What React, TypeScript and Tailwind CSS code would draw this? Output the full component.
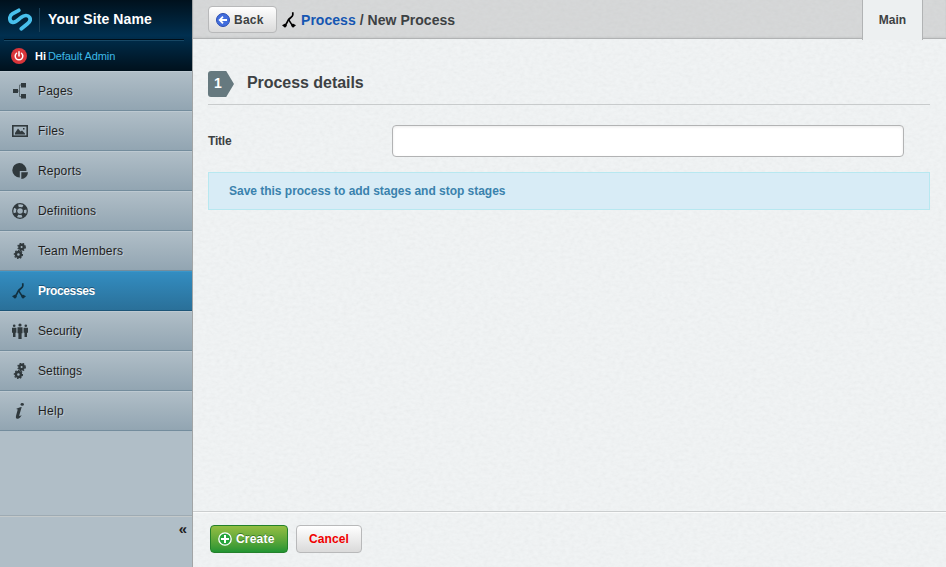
import React from "react";

type IconName = "pages" | "files" | "reports" | "definitions" | "gears" | "process" | "security" | "help";

const Gear = ({ cx, cy, r }: { cx: number; cy: number; r: number }) => (
  <g>
    <circle cx={cx} cy={cy} r={r} fill="none" stroke="currentColor" strokeWidth="2.4" />
    <circle cx={cx} cy={cy} r={r + 1.5} fill="none" stroke="currentColor" strokeWidth="1.3" strokeDasharray="1.5 1.5" />
  </g>
);

const ProcessIcon = ({ className = "" }: { className?: string }) => (
  <svg viewBox="0 0 16 16" className={`size-4 shrink-0 ${className}`} fill="none" stroke="currentColor">
    <path d="M10.800 0.300V3C10.800 4.800 7.500 6 6.300 8C5 10.200 4.600 12 2.800 13.800" strokeWidth="1.700" />
    <path d="M6.500 7.500C8 9 8.300 12 11.300 13.800" strokeWidth="1.500" />
    <path d="M0 13.200L3.200 11.600L5 13.800L3 15.800ZM9 13.800L10.800 11.600L14 13.200L11 15.800Z" fill="currentColor" stroke="none" />
  </svg>
);

const NavIcon = ({ name }: { name: IconName }) => {
  if (name === "process") return <ProcessIcon className="text-[#12303f]" />;
  return (
    <svg viewBox="0 0 16 16" className="size-4 shrink-0 text-[#30393d]" fill="currentColor">
      {name === "pages" && (
        <>
          <path d="M1 6h5v4H1zM9 0h5v4.500H9zM9 11h5v4.500H9z" />
          <path d="M6 8h1.500M9 2H7.500v11.500H9" fill="none" stroke="#5d6a71" />
        </>
      )}
      {name === "files" && (
        <>
          <rect x="0.8" y="2.800" width="14.400" height="10.400" fill="none" stroke="currentColor" strokeWidth="1.6" />
          <path d="M3 11.500V10l3-4.500 2.500 3L10 7.500l3 3v1z" />
          <rect x="11" y="5" width="1.500" height="1.500" />
        </>
      )}
      {name === "reports" && (
        <>
          <path d="M7.200 0A7.200 7.200 0 1 0 7.800 14.400V8h6.600A7.200 7.200 0 0 0 7.200 0z" />
          <path d="M9.300 9.300H16A7 7 0 0 1 9.300 16z" />
        </>
      )}
      {name === "definitions" && (
        <>
          <circle cx="8" cy="8" r="7.300" fill="none" stroke="currentColor" strokeWidth="1.2" />
          <circle cx="8" cy="8" r="5.500" fill="none" stroke="currentColor" strokeWidth="4" strokeDasharray="4 4.640" strokeDashoffset="-2.320" />
          <circle cx="8" cy="8" r="3.400" fill="none" stroke="currentColor" strokeWidth="1.2" />
        </>
      )}
      {name === "gears" && (
        <>
          <Gear cx={9.6} cy={4} r={2.2} />
          <Gear cx={6.4} cy={11.5} r={2.5} />
        </>
      )}
      {name === "security" && (
        <>
          <circle cx="2.200" cy="2.800" r="1.300" />
          <path d="M0 4.800h4.400v5H3.500V14H1V9.800H0z" />
          <circle cx="8" cy="2" r="1.600" />
          <path d="M5.500 4.200h5v6H9.600V16H6.400v-5.800h-.9z" />
          <circle cx="13.800" cy="2.800" r="1.300" />
          <path d="M11.600 4.800H16v5h-1V14h-2.500V9.800h-.9z" />
        </>
      )}
      {name === "help" && (
        <>
          <ellipse cx="10.200" cy="1.400" rx="1.700" ry="1.300" />
          <path d="M4.600 5.600C6 5 7.500 4.300 9.700 4L7.300 12.300c-.3 1.200.7 1 2.400-.2C8.500 14.500 7 16 5.400 15.800c-1.800-.2-1.700-1.700-1.300-3.300L5.600 7c.2-.8-.3-.8-1-.7z" />
        </>
      )}
    </svg>
  );
};

const items: { label: string; icon: IconName; spacing: string }[] = [
  { label: "Pages", icon: "pages", spacing: "tracking-[0.2px]" },
  { label: "Files", icon: "files", spacing: "tracking-[0.2px]" },
  { label: "Reports", icon: "reports", spacing: "tracking-[0.2px]" },
  { label: "Definitions", icon: "definitions", spacing: "tracking-[0.2px]" },
  { label: "Team Members", icon: "gears", spacing: "tracking-[0.2px]" },
  { label: "Processes", icon: "process", spacing: "tracking-[-0.35px]" },
  { label: "Security", icon: "security", spacing: "tracking-[0.1px]" },
  { label: "Settings", icon: "gears", spacing: "tracking-[0.1px]" },
  { label: "Help", icon: "help", spacing: "tracking-[0.3px]" },
];

const Sidebar = () => (
  <aside className="flex w-48 shrink-0 flex-col bg-[#b0bec7]">
    <header className="h-[71px] bg-linear-to-b from-[#00111d] via-[#002f4f] via-50% to-[#00111d]">
      <div className="flex h-[39px] items-center pl-2">
        <svg viewBox="0 0 24 24" className="size-6" fill="none" stroke="#48c0ec" strokeWidth="3.700" strokeLinecap="round">
          <path d="M10.800 2.300L4.300 5.900C0.700 8 1.100 13.800 4.800 14.300C8.500 14.500 10.500 11.300 13 9.500C16 7.200 19.800 6.600 21.500 9.300C23 11.700 21.800 14 19.500 15.700L13.300 20.800" />
        </svg>
        <i className="ml-[7px] h-6 w-px bg-[#1b4158]" />
        <b className="-mt-0.5 ml-2 text-sm leading-5 tracking-[0.1px] whitespace-nowrap text-white">Your Site Name</b>
      </div>
      <div className="mr-2 ml-1 h-0.5 border-t border-b border-t-[#000d17] border-b-[#174764]" />
      <div className="flex h-[30px] items-center pl-[11px] text-[11px]">
        <svg viewBox="0 0 16 16" className="size-4" fill="none" stroke="white" strokeWidth="1.5" strokeLinecap="round">
          <circle cx="8" cy="8" r="8" fill="#d9353a" stroke="none" />
          <path d="M8 3.700V8M5.500 5.200a3.800 3.800 0 1 0 5 0" />
        </svg>
        <b className="ml-2 text-white">Hi</b>
        <span className="ml-0.5 tracking-[-0.1px] text-[#3ebae8]">Default Admin</span>
      </div>
    </header>
    <nav>
      {items.map(({ label, icon, spacing }) => {
        const active = label === "Processes";
        return (
          <a
            key={label}
            className={`flex h-10 items-center border-t border-b pl-3 text-xs ${spacing} ${
              active
                ? "border-t-[#3b96c9] border-b-[#1c5578] bg-linear-to-b from-[#338dc1] to-[#2a7099] font-bold text-white [text-shadow:0_-1px_0_#1c5578]"
                : "border-t-[#bdc9d1] border-b-[#748d9d] bg-linear-to-b from-[#b0bec7] to-[#92a5b2] text-[#1f1f1f] [text-shadow:1px_1px_0_#bfcad2]"
            }`}
          >
            <NavIcon name={icon} />
            <span className="ml-2.5 whitespace-nowrap">{label}</span>
          </a>
        );
      })}
    </nav>
    <div className="mt-auto h-[52px] border-t border-[#9eabb3]">
      <div className="border-t border-[#c3c9ca] pt-0.5 pr-[5px] text-right text-[15px] leading-5 font-bold text-[#1f1f1f]">«</div>
    </div>
  </aside>
);

const Paper = () => (
  <svg className="pointer-events-none absolute inset-0 size-full opacity-[0.07]">
    <filter id="grain">
      <feTurbulence type="fractalNoise" baseFrequency="0.22 0.32" numOctaves="3" seed="4" />
      <feColorMatrix type="saturate" values="0" />
      <feComponentTransfer>
        <feFuncA type="linear" slope="0" intercept="1" />
      </feComponentTransfer>
    </filter>
    <rect width="100%" height="100%" filter="url(#grain)" />
  </svg>
);

export default function App() {
  return (
    <div className="flex h-[567px] w-[946px] overflow-hidden font-['Liberation_Sans',Arial,sans-serif] text-[#3d4143]">
      <Sidebar />
      <main className="relative isolate flex min-w-0 flex-1 flex-col border-l border-[#a2a5a6] bg-[#f3f6f7]">
        <div className="-z-10">
          <Paper />
        </div>
        <header className="flex h-[39px] shrink-0 border-b border-[#b1b3b4] bg-[#b0b0b0]/40 shadow-[inset_0_-1px_2px_#00000010]">
          <button className="mt-1.5 ml-[15px] flex h-[27px] w-[69px] items-center rounded border border-[#b8b9ba] bg-linear-to-b from-white to-[#dadada] pl-[7px] text-xs font-bold tracking-[0.25px]">
            <svg viewBox="0 0 14 14" className="size-3.5" fill="none">
              <circle cx="7" cy="7" r="6.500" fill="#416ddd" stroke="#2b4daf" />
              <path d="M11 7H4M7 3.700L3.700 7 7 10.300" stroke="white" strokeWidth="1.800" />
            </svg>
            <span className="ml-1">Back</span>
          </button>
          <ProcessIcon className="mt-3 ml-[5px] text-black" />
          <h1 className="mt-2.5 ml-[3px] text-sm leading-5 font-bold tracking-[0.04px] whitespace-nowrap">
            <a className="text-[#1556b2]">Process</a> / New Process
          </h1>
          <div className="mr-[23px] ml-auto h-10 w-[61px] border-r border-l border-[#b1b3b4] bg-[#edf0f1] pt-3 text-center text-xs leading-4 font-bold">
            Main
          </div>
        </header>
        <section className="flex-1 pr-4 pl-[15px]">
          <div className="flex h-[66px] items-end border-b border-[#c8cbcc] pb-[7px]">
            <div className="h-[26px] w-[26px] rounded-l-[3px] bg-[#66797f] pl-1.5 text-sm leading-[25px] font-bold text-white [clip-path:polygon(0_0,70%_0,100%_50%,70%_100%,0_100%)]">1</div>
            <h2 className="ml-[13px] text-base leading-7 font-bold tracking-[-0.05px]">Process details</h2>
          </div>
          <div className="mt-5 flex h-8 items-center text-xs font-bold">
            <label className="w-[184px] tracking-[-0.2px]">Title</label>
            <input className="h-8 w-[512px] rounded border border-[#b2b3b4] bg-white shadow-[inset_0_1px_3px_#00000015]" />
          </div>
          <div className="mt-[15px] flex h-[38px] items-center border border-[#b8e8f0] bg-[#d8ecf6] pl-5 text-xs font-bold tracking-[-0.02px] text-[#3a82ad]">
            Save this process to add stages and stop stages
          </div>
        </section>
        <footer className="flex h-14 gap-2 border-t border-[#cbcecf] pt-[13px] pl-[17px] text-xs font-bold shadow-[inset_0_1px_0_#fafbfb]">
          <button className="flex h-7 w-[78px] items-center rounded border border-[#24812b] bg-linear-to-b from-[#93be42] to-[#1f9433] pl-[7px] tracking-[0.2px] text-white [text-shadow:0_-1px_0_#3c7a29]">
            <svg viewBox="0 0 14 14" className="size-3.5" fill="none">
              <circle cx="7" cy="7" r="6.200" fill="#25a53b" stroke="white" strokeWidth="1.300" />
              <path d="M7 3v8M3 7h8" stroke="white" strokeWidth="2" />
            </svg>
            <span className="ml-1">Create</span>
          </button>
          <button className="h-7 w-[66px] rounded border border-[#b8b9ba] bg-linear-to-b from-white to-[#dadada] tracking-[0.1px] text-[#f00000]">Cancel</button>
        </footer>
      </main>
    </div>
  );
}
